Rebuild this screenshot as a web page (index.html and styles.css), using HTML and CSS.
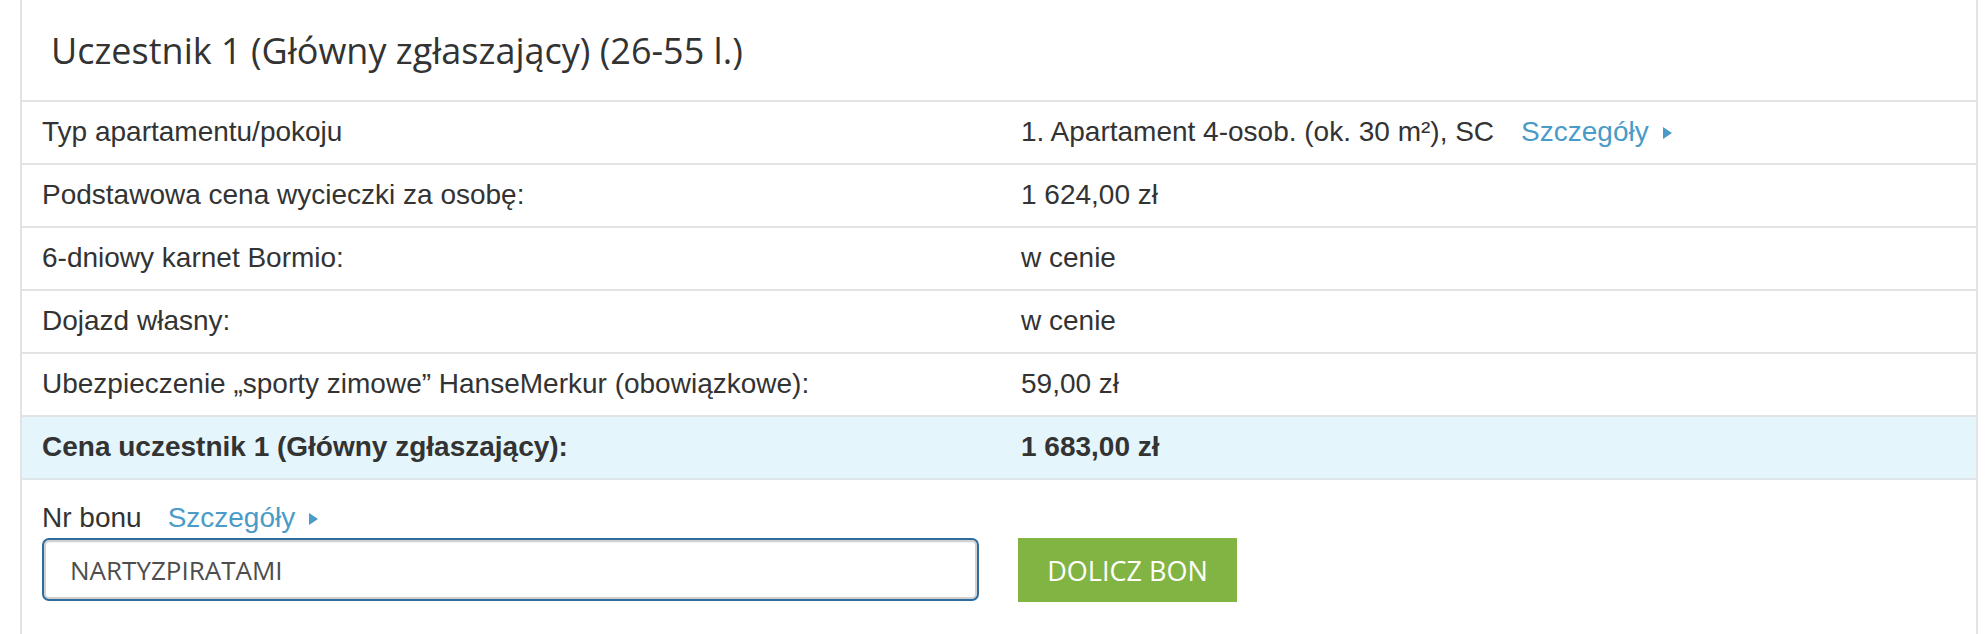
FILE: index.html
```html
<!DOCTYPE html>
<html lang="pl">
<head>
<meta charset="utf-8">
<title>Uczestnik 1</title>
<link rel="stylesheet" href="styles.css">
</head>
<body>
<div class="panel">
  <div class="panel-head">
    <h2 class="panel-title">Uczestnik 1 (Główny zgłaszający) (26-55 l.)</h2>
  </div>
  <div class="rows">
    <div class="row">
      <div class="cell">Typ apartamentu/pokoju</div>
      <div class="cell">1. Apartament 4-osob. (ok. 30 m²), SC<a class="more" href="#">Szczegóły<span class="tri"></span></a></div>
    </div>
    <div class="row">
      <div class="cell">Podstawowa cena wycieczki za osobę:</div>
      <div class="cell">1 624,00 zł</div>
    </div>
    <div class="row">
      <div class="cell">6-dniowy karnet Bormio:</div>
      <div class="cell">w cenie</div>
    </div>
    <div class="row">
      <div class="cell">Dojazd własny:</div>
      <div class="cell">w cenie</div>
    </div>
    <div class="row">
      <div class="cell">Ubezpieczenie „sporty zimowe” HanseMerkur (obowiązkowe):</div>
      <div class="cell">59,00 zł</div>
    </div>
    <div class="row total">
      <div class="cell">Cena uczestnik 1 (Główny zgłaszający):</div>
      <div class="cell">1 683,00 zł</div>
    </div>
  </div>
  <div class="bon">
    <div class="bon-label">Nr bonu<a class="more" href="#">Szczegóły<span class="tri"></span></a></div>
    <div class="bon-form">
      <input class="bon-input" type="text" value="NARTYZPIRATAMI" autofocus>
      <button class="bon-btn" type="button">DOLICZ BON</button>
    </div>
  </div>
</div>
</body>
</html>
```
FILE: styles.css
```css
html, body {
  margin: 0;
  padding: 0;
  background: #ffffff;
}

body {
  font-family: "Liberation Sans", Arial, sans-serif;
  color: #333333;
  overflow: hidden;
}

.panel {
  margin-left: 20px;
  width: 1958px;
  box-sizing: border-box;
  border-left: 2px solid #e3e3e3;
  border-right: 2px solid #e3e3e3;
  min-height: 634px;
}

.panel-head {
  height: 102px;
  box-sizing: border-box;
  padding: 27px 0 0 29px;
  border-bottom: 2px solid #e3e3e3;
}

.panel-title {
  margin: 0;
  font-family: "Open Sans", "Liberation Sans", sans-serif;
  font-weight: 400;
  font-size: 36px;
  line-height: 48px;
  color: #333333;
}

.row {
  display: grid;
  grid-template-columns: 979px 1fr;
  border-bottom: 2px solid #e3e3e3;
  height: 63px;
  box-sizing: border-box;
}

.cell {
  padding: 12px 20px 0 20px;
  font-size: 28px;
  line-height: 36px;
  white-space: nowrap;
}

.row.total {
  background: #e4f5fc;
  border-bottom-color: #dfe6ea;
}

.row.total .cell {
  font-weight: 700;
}

.more {
  color: #4a9bc8;
  text-decoration: none;
  margin-left: 27px;
}

.tri {
  display: inline-block;
  width: 0;
  height: 0;
  border-left: 9px solid #4a9bc8;
  border-top: 6.5px solid transparent;
  border-bottom: 6.5px solid transparent;
  margin-left: 14px;
  vertical-align: 2px;
}

.bon {
  padding: 20px 20px 40px 20px;
}

.bon-label {
  font-size: 28px;
  line-height: 36px;
  margin-bottom: 2px;
}

.bon-label .more {
  margin-left: 26px;
}

.bon-form {
  display: flex;
  align-items: flex-start;
}

.bon-input {
  width: 937px;
  height: 63px;
  box-sizing: border-box;
  margin: 0;
  border: 2px solid #2f6c9c;
  border-radius: 7px;
  box-shadow: inset 0 0 0 2px #d0d0d0, inset 0 3px 2px rgba(0, 0, 0, 0.06);
  padding: 0 0 0 26px;
  font-family: "Open Sans", "Liberation Sans", sans-serif;
  font-size: 26px;
  color: #4d4d4d;
  outline: none;
  caret-color: #000000;
  background: #ffffff;
}

.bon-btn {
  margin: 0 0 0 39px;
  width: 219px;
  height: 64px;
  border: 0;
  border-radius: 0;
  background: #82b443;
  color: #ffffff;
  font-family: "Open Sans", "Liberation Sans", sans-serif;
  font-size: 27px;
  padding: 0;
}
```
